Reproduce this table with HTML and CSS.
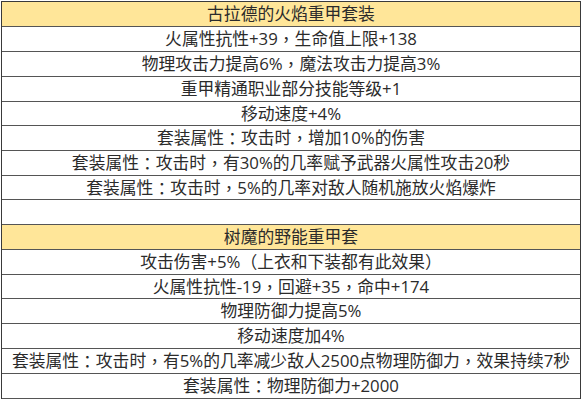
FILE: index.html
```html
<!DOCTYPE html>
<html lang="zh">
<head>
<meta charset="utf-8">
<link rel="stylesheet" href="styles.css">
</head>
<body>
<div class="sheet">
  <div class="row head">古拉德的火焰重甲套装</div>
  <div class="row">火属性抗性+39<span class="p">，</span>生命值上限+138</div>
  <div class="row">物理攻击力提高6%<span class="p">，</span>魔法攻击力提高3%</div>
  <div class="row">重甲精通职业部分技能等级+1</div>
  <div class="row short">移动速度+4%</div>
  <div class="row">套装属性<span class="p">：</span>攻击时<span class="p">，</span>增加10%的伤害</div>
  <div class="row">套装属性<span class="p">：</span>攻击时<span class="p">，</span>有30%的几率赋予武器火属性攻击20秒</div>
  <div class="row short">套装属性<span class="p">：</span>攻击时<span class="p">，</span>5%的几率对敌人随机施放火焰爆炸</div>
  <div class="row"></div>
  <div class="row head">树魔的野能重甲套</div>
  <div class="row">攻击伤害+5%<span class="p">（</span>上衣和下装都有此效果<span class="p">）</span></div>
  <div class="row short">火属性抗性-19<span class="p">，</span>回避+35<span class="p">，</span>命中+174</div>
  <div class="row">物理防御力提高5%</div>
  <div class="row">移动速度加4%</div>
  <div class="row">套装属性<span class="p">：</span>攻击时<span class="p">，</span>有5%的几率减少敌人2500点物理防御力<span class="p">，</span>效果持续7秒</div>
  <div class="row">套装属性<span class="p">：</span>物理防御力+2000</div>
</div>
</body>
</html>
```

FILE: styles.css
```css
html, body {
  margin: 0;
  padding: 0;
  background: #ffffff;
}
body {
  width: 584px;
  height: 400px;
  overflow: hidden;
  font-family: "Open Sans", "Noto Sans CJK SC", sans-serif;
  color: #2b2b2b;
}
.sheet {
  margin: 1px 0 0 1px;
  width: 578px;
  border: 1px solid #3a3a3a;
  border-bottom: none;
  display: flex;
  flex-direction: column;
}
.row {
  height: 24px;
  border-bottom: 1px solid #555555;
  display: flex;
  align-items: center;
  justify-content: center;
  font-size: 16.8px;
  line-height: 24px;
  white-space: nowrap;
  text-spacing-trim: space-all;
}
.row.short {
  height: 23px;
}
.head {
  background: #ffe699;
}
.p {
  display: inline-block;
  width: 1em;
  text-align: center;
  font-family: "Noto Sans CJK TC", "Noto Sans CJK SC", sans-serif;
}
```
